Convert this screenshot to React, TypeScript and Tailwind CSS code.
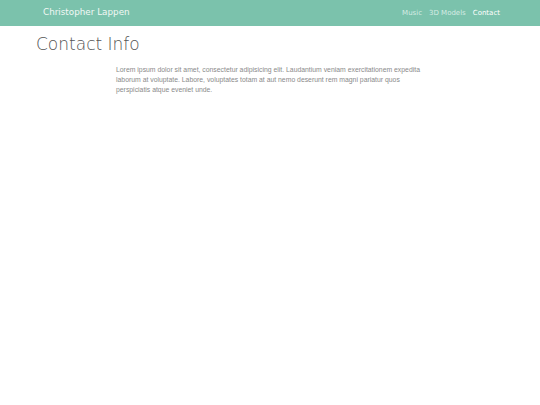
import React from 'react';

const links = [
  { label: 'Music', active: false },
  { label: '3D Models', active: false },
  { label: 'Contact', active: true },
];

export default function App() {
  return (
    <div className="min-h-[405px] bg-white">
      <nav className="h-[26px] bg-[#7bc2ac]">
        <div className="flex h-full items-center justify-between pl-[43px] pr-[40px]" style={{ fontFamily: '"DejaVu Sans", "Open Sans", sans-serif' }}>
          <span className="text-[8.8px] text-[#f2f8f5]">Christopher Lappen</span>
          <ul className="flex gap-[7px] text-[7px]">
            {links.map(l => (
              <li key={l.label} className={l.active ? 'text-white' : 'text-[#d5ece4]'}>
                {l.label}
              </li>
            ))}
          </ul>
        </div>
      </nav>

      <main className="px-[36px]">
        <h1 className="mt-[6px] text-[17px] leading-[24px] text-[#555555]" style={{ fontFamily: '"DejaVu Sans", "Open Sans", sans-serif', fontWeight: 300 }}>
          Contact Info
        </h1>
        <p className="ml-[80px] mt-[9px] w-[306px] text-[6.85px] leading-[10px] text-[#8a8a8a]" style={{ fontFamily: '"Liberation Sans", Arial, sans-serif' }}>
          Lorem ipsum dolor sit amet, consectetur adipisicing elit. Laudantium veniam exercitationem expedita laborum at voluptate. Labore, voluptates totam at aut nemo deserunt rem magni pariatur quos perspiciatis atque eveniet unde.
        </p>
      </main>
    </div>
  );
}
